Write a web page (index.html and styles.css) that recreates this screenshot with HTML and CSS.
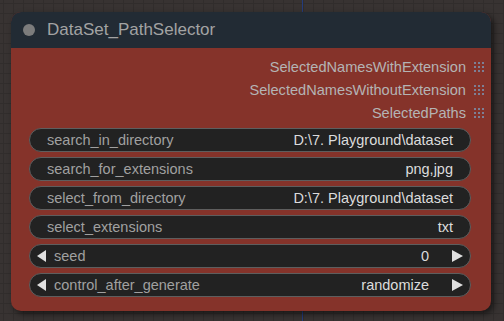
FILE: index.html
```html
<!DOCTYPE html>
<html lang="en">
<head>
    <meta charset="UTF-8">
    <title>DataSet_PathSelector</title>
    <link rel="stylesheet" href="styles.css">
</head>
<body>
    <div class="node">
        <div class="node-title">
            <span class="dot"></span>
            <span class="title-text">DataSet_PathSelector</span>
        </div>
        <div class="node-body">
            <div class="outputs">
                <div class="output">SelectedNamesWithExtension <span class="grip"></span></div>
                <div class="output">SelectedNamesWithoutExtension <span class="grip"></span></div>
                <div class="output">SelectedPaths <span class="grip"></span></div>
            </div>
            <div class="widgets">
                <div class="widget">
                    <span class="label">search_in_directory</span>
                    <span class="value">D:\7. Playground\dataset</span>
                </div>
                <div class="widget">
                    <span class="label">search_for_extensions</span>
                    <span class="value">png,jpg</span>
                </div>
                <div class="widget">
                    <span class="label">select_from_directory</span>
                    <span class="value">D:\7. Playground\dataset</span>
                </div>
                <div class="widget">
                    <span class="label">select_extensions</span>
                    <span class="value">txt</span>
                </div>
                <div class="widget combo">
                    <span class="arrow left"></span>
                    <span class="label">seed</span>
                    <span class="value">0</span>
                    <span class="arrow right"></span>
                </div>
                <div class="widget combo">
                    <span class="arrow left"></span>
                    <span class="label">control_after_generate</span>
                    <span class="value">randomize</span>
                    <span class="arrow right"></span>
                </div>
            </div>
        </div>
    </div>
</body>
</html>
```

FILE: styles.css
```css
body {
    margin: 0;
    padding: 12px 0 0 11px;
    height: 321px;
    box-sizing: border-box;
    overflow: hidden;
    font-family: 'Liberation Sans', Arial, sans-serif;
    background-color: #383332;
    background-image:
        linear-gradient(90deg, transparent 302px, #243c7c 302px, #243c7c 303px, transparent 303px),
        linear-gradient(90deg, #312d2c 1px, transparent 1px),
        linear-gradient(#312d2c 1px, transparent 1px);
    background-size: 100% 100%, 10px 10px, 10px 10px;
    background-position: 0 0, 3px 0, 0 3px;
}
.node {
    width: 480px;
    height: 299px;
    border-radius: 10px;
    overflow: hidden;
    background: #85332a;
    box-shadow: 3px 3px 6px rgba(0, 0, 0, 0.55);
}
.node-title {
    height: 36px;
    background: #222b34;
    display: flex;
    align-items: center;
    padding-left: 12px;
}
.dot {
    width: 12px;
    height: 12px;
    border-radius: 50%;
    background: #7c7c7c;
}
.title-text {
    margin-left: 12px;
    color: #a3a3a3;
    font-size: 17px;
}
.node-body {
    padding: 7px 0 0 18px;
}
.outputs {
    display: flex;
    flex-direction: column;
    align-items: flex-end;
    padding-right: 7px;
}
.output {
    height: 23px;
    display: flex;
    align-items: center;
    gap: 8px;
    color: #b4b4b4;
    font-size: 14.6px;
}
.grip {
    width: 10px;
    height: 10px;
    background-image:
        linear-gradient(90deg, transparent 2px, #85332a 2px, #85332a 4px, transparent 4px, transparent 6px, #85332a 6px, #85332a 8px, transparent 8px),
        linear-gradient(transparent 2px, #85332a 2px, #85332a 4px, transparent 4px, transparent 6px, #85332a 6px, #85332a 8px, transparent 8px);
    background-color: #7d8095;
}
.widgets {
    margin-top: 4px;
    width: 442px;
    display: flex;
    flex-direction: column;
    gap: 5px;
}
.widget {
    height: 24px;
    box-sizing: border-box;
    border: 1px solid #5e5e5e;
    border-radius: 12px;
    background: #222;
    display: flex;
    align-items: center;
    padding: 0 17px;
    font-size: 14.5px;
}
.widget.combo {
    padding: 0 7px;
}
.label {
    color: #a0a0a0;
    flex: 1;
}
.value {
    color: #dcdcdc;
}
.arrow {
    width: 0;
    height: 0;
    border-top: 6px solid transparent;
    border-bottom: 6px solid transparent;
}
.arrow.left {
    border-right: 9px solid #e0e0e0;
    margin-right: 8px;
}
.arrow.right {
    border-left: 11px solid #e0e0e0;
    margin-left: 23px;
}
```
